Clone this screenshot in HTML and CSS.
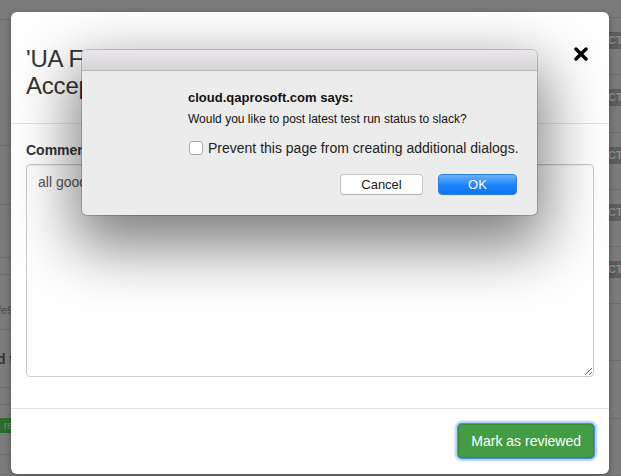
FILE: index.html
```html
<!DOCTYPE html>
<html>
<head>
<meta charset="utf-8">
<link rel="stylesheet" href="styles.css">
</head>
<body>
<div class="page">
  <div class="col-left">
    <div class="lrow lh20"></div>
    <div class="lrow lh126"></div>
    <div class="lrow lh59"></div>
    <div class="lrow lh53"></div>
    <div class="lrow lh17"></div>
    <div class="lrow lh55"><span class="ltext">fe9</span></div>
    <div class="lrow lh60"><span class="lbold">d t</span></div>
    <div class="lrow lh17"></div>
    <div class="lrow lh48"><span class="lbadge">re</span></div>
    <div class="lrow lh20"></div>
  </div>
  <div class="col-main"></div>
  <div class="col-right">
    <div class="rrow rfirst"></div>
    <div class="rrow"><span class="rbadge">CT</span></div>
    <div class="rrow"><span class="rbadge">CT</span></div>
    <div class="rrow"><span class="rbadge">CT</span></div>
    <div class="rrow"><span class="rbadge">CT</span></div>
    <div class="rrow"><span class="rbadge">CT</span></div>
    <div class="rrow"></div>
    <div class="rrow"></div>
    <div class="rrow"></div>
  </div>
</div>

<div class="modal">
  <div class="modal-header">
    <h4 class="modal-title">'UA Full Regression' test run<br>Acceptance</h4>
    <svg class="close" width="14" height="14" viewBox="0 0 14 14"><path d="M2 2 L12 12 M12 2 L2 12" stroke="#000" stroke-width="3.4" stroke-linecap="round" fill="none"/></svg>
  </div>
  <div class="modal-body">
    <label class="label">Comments</label>
    <textarea class="textarea">all good</textarea>
  </div>
  <div class="modal-footer">
    <button class="btn-success">Mark as reviewed</button>
  </div>
</div>

<div class="alert">
  <div class="alert-titlebar"></div>
  <div class="alert-body">
    <div class="alert-title">cloud.qaprosoft.com says:</div>
    <div class="alert-msg">Would you like to post latest test run status to slack?</div>
    <div class="alert-check"><span class="checkbox"></span><span>Prevent this page from creating additional dialogs.</span></div>
    <div class="alert-buttons">
      <button class="btn-cancel">Cancel</button>
      <button class="btn-ok">OK</button>
    </div>
  </div>
</div>
</body>
</html>
```

FILE: styles.css
```css
html, body {
  margin: 0;
  padding: 0;
}
body {
  width: 621px;
  height: 476px;
  overflow: hidden;
  background: #7b7b7b;
  font-family: "Liberation Sans", Arial, Helvetica, sans-serif;
  position: relative;
}

/* background page */
.page {
  display: flex;
  height: 476px;
}
.col-left {
  width: 11px;
  overflow: hidden;
  display: flex;
  flex-direction: column;
}
.col-main {
  flex: 1;
}
.col-right {
  width: 14px;
  display: flex;
  flex-direction: column;
}
.lrow {
  border-bottom: 1px solid #6e6e6e;
  box-sizing: border-box;
  white-space: nowrap;
  display: flex;
  justify-content: flex-start;
  align-items: center;
}
.lh20 { height: 20px; }
.lh126 { height: 126px; }
.lh59 { height: 59px; }
.lh53 { height: 53px; }
.lh17 { height: 17px; }
.lh55 { height: 55px; }
.lh60 { height: 58px; }
.lh48 { height: 50px; }
.ltext {
  font-size: 11px;
  color: #4a4a4a;
  margin-top: 16px;
  margin-left: -2px;
}
.lbold {
  font-size: 14px;
  font-weight: bold;
  color: #333;
  margin-left: -3px;
}
.lbadge {
  background: #2f6a2f;
  color: #6e9a6e;
  font-size: 10px;
  line-height: 15px;
  width: 11px;
  padding-left: 4px;
  box-sizing: border-box;
  overflow: hidden;
  margin-top: -8px;
}
.rrow {
  height: 62px;
  border-bottom: 1px solid #6e6e6e;
  box-sizing: border-box;
  padding-top: 14px;
}
.rrow.rfirst {
  height: 20px;
  padding: 0;
}
.rbadge {
  display: block;
  background: #5e5e5e;
  color: #8d8d8d;
  font-size: 11px;
  font-weight: bold;
  line-height: 17px;
  padding-left: 1px;
  white-space: nowrap;
}

/* modal */
.modal {
  position: absolute;
  left: 11px;
  top: 12px;
  width: 598px;
  height: 462px;
  background: #fff;
  border-radius: 6px;
  box-shadow: 0 2px 6px rgba(0,0,0,0.35);
  display: flex;
  flex-direction: column;
  overflow: hidden;
}
.modal-header {
  display: flex;
  justify-content: space-between;
  align-items: flex-start;
  padding: 33px 15px 24px 15px;
  border-bottom: 1px solid #e5e5e5;
}
.modal-title {
  margin: 0;
  font-size: 24px;
  line-height: 27px;
  font-weight: 500;
  color: #333;
  letter-spacing: -0.2px;
}
.close {
  margin-top: 2px;
  margin-right: 6px;
  flex: none;
}
.modal-body {
  padding: 16px 15px 31px 15px;
  display: flex;
  flex-direction: column;
  flex: 1;
}
.label {
  font-size: 14px;
  line-height: 20px;
  font-weight: bold;
  color: #333;
  margin-bottom: 4px;
}
.textarea {
  box-sizing: border-box;
  width: 568px;
  height: 213px;
  margin: 0;
  border: 1px solid #ccc;
  border-radius: 4px;
  padding: 7px 11px;
  font-family: "Liberation Sans", Arial, Helvetica, sans-serif;
  font-size: 14px;
  line-height: 20px;
  color: #555;
  resize: vertical;
  box-shadow: inset 0 1px 1px rgba(0,0,0,0.075);
}
.modal-footer {
  border-top: 1px solid #e5e5e5;
  padding: 15px 15px 16px 15px;
  display: flex;
  justify-content: flex-end;
}
.btn-success {
  font-family: "Liberation Sans", Arial, Helvetica, sans-serif;
  font-size: 14px;
  line-height: 20px;
  color: #fff;
  background: #449d44;
  border: 1px solid #3a8a3a;
  border-radius: 4px;
  padding: 6px 12px;
  height: 34px;
  box-shadow: 0 0 0 1px #4a90e2, 0 0 2px 3px rgba(110,170,240,0.55);
}

/* JS alert dialog */
.alert {
  position: absolute;
  left: 82px;
  top: 50px;
  width: 455px;
  height: 165px;
  box-sizing: border-box;
  background: #ececec;
  border-radius: 5px;
  box-shadow: 0 0 0 1px rgba(0,0,0,0.18), 0 24px 60px 8px rgba(0,0,0,0.5);
  overflow: hidden;
  display: flex;
  flex-direction: column;
}
.alert-titlebar {
  height: 20px;
  border-bottom: 1px solid #b8b6b8;
  background: linear-gradient(#e9e7e9, #d6d4d6);
  flex: none;
}
.alert-body {
  padding: 19px 20px 0 106px;
  display: flex;
  flex-direction: column;
}
.alert-title {
  font-size: 13px;
  line-height: 16px;
  font-weight: bold;
  color: #111;
}
.alert-msg {
  font-size: 12px;
  line-height: 14px;
  color: #111;
  margin-top: 6px;
  white-space: nowrap;
}
.alert-check {
  display: flex;
  align-items: flex-start;
  gap: 5px;
  margin-top: 14px;
  font-size: 14px;
  line-height: 16px;
  color: #222;
  padding-left: 1px;
  white-space: nowrap;
}
.checkbox {
  width: 12px;
  height: 12px;
  border: 1px solid #a8a8a8;
  border-radius: 3px;
  background: #fff;
  margin-top: 1px;
  flex: none;
}
.alert-buttons {
  display: flex;
  justify-content: flex-end;
  gap: 15px;
  margin-top: 18px;
}
.btn-cancel, .btn-ok {
  font-family: "Liberation Sans", Arial, Helvetica, sans-serif;
  font-size: 13px;
  height: 21px;
  border-radius: 4px;
  padding: 0;
  line-height: 19px;
  box-sizing: border-box;
}
.btn-cancel {
  width: 83px;
  background: #fff;
  border: 1px solid #c6c6c6;
  border-bottom-color: #b2b2b2;
  color: #1a1a1a;
}
.btn-ok {
  width: 79px;
  background: linear-gradient(#6db3fb, #1b83fb 55%, #0f76f3);
  border: 1px solid #2d7fe8;
  color: #fff;
}
```
